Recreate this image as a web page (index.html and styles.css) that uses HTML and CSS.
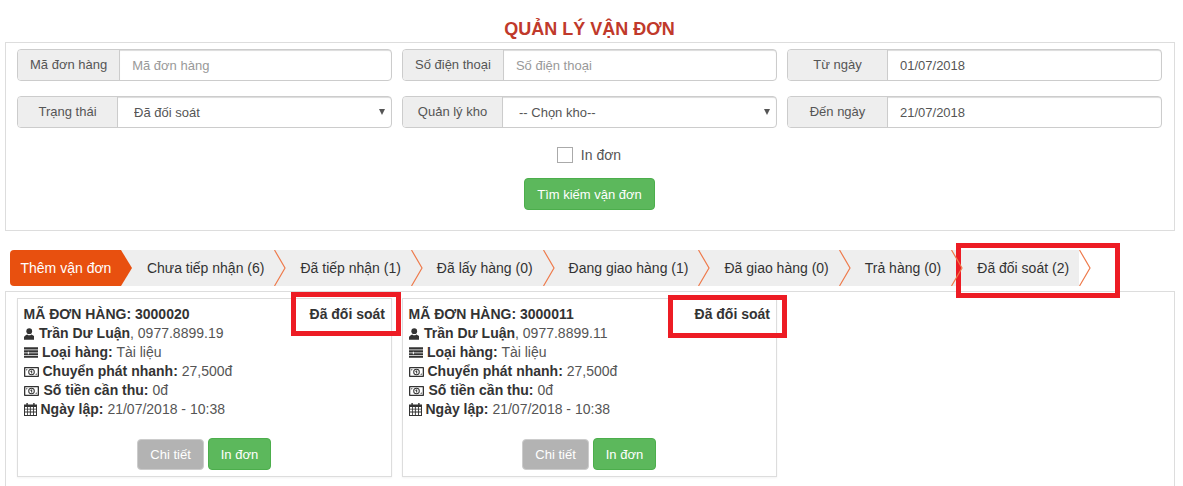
FILE: index.html
```html
<!DOCTYPE html>
<html lang="vi">
<head>
<meta charset="utf-8">
<title>Quản lý vận đơn</title>
<link rel="stylesheet" href="styles.css">
</head>
<body>
<svg class="sprite" aria-hidden="true">
  <symbol id="i-user" viewBox="0 0 11 12"><ellipse cx="5.5" cy="3" rx="3" ry="3"/><path d="M0 12V9.4C0 7.8 2 7.3 3.3 6.4 4.6 7.6 6.4 7.6 7.7 6.4 9 7.3 11 7.8 11 9.4V12Z"/></symbol>
  <symbol id="i-list" viewBox="0 0 15 11"><path d="M0 0H15V2.4H0ZM0 3.3H15V5.4H5V4.6H4V5.4H0ZM0 6.2H4V7.2H5V6.2H15V8H0ZM0 8.8H15V11H0Z"/></symbol>
  <symbol id="i-money" viewBox="0 0 15 10"><path fill-rule="evenodd" d="M.8 0H14.2Q15 0 15 .8V9.2Q15 10 14.2 10H.8Q0 10 0 9.2V.8Q0 0 .8 0ZM1.3 1.3V8.7H13.7V1.3Z"/><path fill-rule="evenodd" d="M7.5 1.7A3.3 3.3 0 1 1 7.5 8.3 3.3 3.3 0 1 1 7.5 1.7ZM7.5 2.7A2.3 2.3 0 1 0 7.5 7.3 2.3 2.3 0 1 0 7.5 2.7Z"/><path d="M7.2 3.5H8.2V6.6H7.2V4.5L6.6 4.9 6.2 4.3ZM2.2 2.2H3.8L2.2 3.8ZM12.8 7.8H11.2L12.8 6.2Z"/></symbol>
  <symbol id="i-cal" viewBox="0 0 13 13"><path fill-rule="evenodd" d="M0 1.5H2.4V0H3.8V1.5H9.2V0H10.6V1.5H13V13H0ZM1 4V5.8H3V4ZM3.8 4V5.8H5.9V4ZM6.8 4V5.8H9V4ZM9.9 4V5.8H12V4ZM1 6.6V8.6H3V6.6ZM3.8 6.6V8.6H5.9V6.6ZM6.8 6.6V8.6H9V6.6ZM9.9 6.6V8.6H12V6.6ZM1 9.4V12H3V9.4ZM3.8 9.4V12H5.9V9.4ZM6.8 9.4V12H9V9.4ZM9.9 9.4V12H12V9.4Z"/></symbol>
  <symbol id="i-chev" viewBox="0 0 12 36"><path d="M.5 0 11 18 .5 36" fill="none" stroke="#ee7a4b" stroke-width="1.2"/></symbol>
</svg>

<h1 class="page-title">QUẢN LÝ VẬN ĐƠN</h1>

<section class="panel filter">
  <div class="filter-grid">
    <label class="group"><span class="addon">Mã đơn hàng</span><input class="control" type="text" placeholder="Mã đơn hàng"></label>
    <label class="group"><span class="addon">Số điện thoại</span><input class="control" type="text" placeholder="Số điện thoại"></label>
    <label class="group"><span class="addon">Từ ngày</span><input class="control" type="text" value="01/07/2018"></label>
    <label class="group"><span class="addon">Trạng thái</span><span class="select-wrap"><select class="control select"><option>Đã đối soát</option></select></span></label>
    <label class="group"><span class="addon">Quản lý kho</span><span class="select-wrap"><select class="control select"><option>-- Chọn kho--</option></select></span></label>
    <label class="group"><span class="addon">Đến ngày</span><input class="control" type="text" value="21/07/2018"></label>
  </div>
  <label class="check"><span class="check-box"></span>In đơn</label>
  <div class="search-row"><button class="btn btn-green" type="button">Tìm kiếm vận đơn</button></div>
</section>

<ul class="tabs">
  <li class="tab tab-add">Thêm vận đơn</li>
  <li class="tab">Chưa tiếp nhận (6)<svg class="chev"><use href="#i-chev"/></svg></li>
  <li class="tab">Đã tiếp nhận (1)<svg class="chev"><use href="#i-chev"/></svg></li>
  <li class="tab">Đã lấy hàng (0)<svg class="chev"><use href="#i-chev"/></svg></li>
  <li class="tab">Đang giao hàng (1)<svg class="chev"><use href="#i-chev"/></svg></li>
  <li class="tab">Đã giao hàng (0)<svg class="chev"><use href="#i-chev"/></svg></li>
  <li class="tab">Trả hàng (0)<svg class="chev"><use href="#i-chev"/></svg></li>
  <li class="tab">Đã đối soát (2)<svg class="chev"><use href="#i-chev"/></svg></li>
</ul>

<section class="panel orders">
  <article class="card">
    <div class="card-head"><b>MÃ ĐƠN HÀNG: 3000020</b><b>Đã đối soát</b></div>
    <div class="line"><svg class="ic ic-user"><use href="#i-user"/></svg><b>Trần Dư Luận</b>, 0977.8899.19</div>
    <div class="line"><svg class="ic ic-list"><use href="#i-list"/></svg><b>Loại hàng:</b> Tài liệu</div>
    <div class="line"><svg class="ic ic-money"><use href="#i-money"/></svg><b>Chuyển phát nhanh:</b> 27,500đ</div>
    <div class="line"><svg class="ic ic-money ic-wide"><use href="#i-money"/></svg><b>Số tiền cần thu:</b> 0đ</div>
    <div class="line"><svg class="ic ic-cal"><use href="#i-cal"/></svg><b>Ngày lập:</b> 21/07/2018 - 10:38</div>
    <div class="card-actions"><button class="btn btn-grey" type="button">Chi tiết</button><button class="btn btn-green" type="button">In đơn</button></div>
  </article>
  <article class="card">
    <div class="card-head"><b>MÃ ĐƠN HÀNG: 3000011</b><b>Đã đối soát</b></div>
    <div class="line"><svg class="ic ic-user"><use href="#i-user"/></svg><b>Trần Dư Luận</b>, 0977.8899.11</div>
    <div class="line"><svg class="ic ic-list"><use href="#i-list"/></svg><b>Loại hàng:</b> Tài liệu</div>
    <div class="line"><svg class="ic ic-money"><use href="#i-money"/></svg><b>Chuyển phát nhanh:</b> 27,500đ</div>
    <div class="line"><svg class="ic ic-money ic-wide"><use href="#i-money"/></svg><b>Số tiền cần thu:</b> 0đ</div>
    <div class="line"><svg class="ic ic-cal"><use href="#i-cal"/></svg><b>Ngày lập:</b> 21/07/2018 - 10:38</div>
    <div class="card-actions"><button class="btn btn-grey" type="button">Chi tiết</button><button class="btn btn-green" type="button">In đơn</button></div>
  </article>
</section>

<div class="mark mark-card1"></div>
<div class="mark mark-card2"></div>
<div class="mark mark-tab"></div>
</body>
</html>
```

FILE: styles.css
```css
* { box-sizing: border-box; }
html, body { height: 486px; overflow: hidden; }
body {
  margin: 0;
  position: relative;
  background: #fff;
  color: #555;
  font: 14px/19px "Liberation Sans", Arial, sans-serif;
}
.sprite { position: absolute; width: 0; height: 0; }

.page-title {
  margin: 0;
  height: 42px;
  padding: 18px 4px 0 0;
  text-align: center;
  color: #c0392b;
  font-size: 18px;
  line-height: 22px;
  font-weight: 700;
}

.panel {
  margin: 0 8px 0 5px;
  border: 1px solid #ddd;
  background: #fff;
}
.filter { height: 189px; padding: 6px 12px 0 11px; }

.filter-grid {
  display: grid;
  grid-template-columns: repeat(3, 375px);
  column-gap: 10px;
  row-gap: 15px;
  font-size: 13px;
}
.group {
  display: flex;
  height: 32px;
  border: 1px solid #ccc;
  border-radius: 4px;
  overflow: hidden;
  box-shadow: inset 0 1px 1px rgba(0,0,0,.075);
}
.addon {
  flex: none;
  min-width: 100px;
  padding: 0 12px;
  background: #eee;
  border-right: 1px solid #ccc;
  color: #555;
  line-height: 29px;
  text-align: center;
  white-space: nowrap;
}
.control {
  flex: 1;
  min-width: 0;
  width: 100%;
  height: 100%;
  padding: 0 12px;
  border: 0;
  outline: 0;
  background: transparent;
  color: #555;
  font: inherit;
  box-shadow: inset 0 1px 1px rgba(0,0,0,.075);
}
.control::placeholder { color: #999; opacity: 1; }
.select-wrap { flex: 1; position: relative; min-width: 0; }
.select { display: block; padding-left: 16px; appearance: none; -webkit-appearance: none; }
.select-wrap::after {
  content: "";
  position: absolute;
  right: 6px;
  top: 12px;
  border-top: 6px solid #555;
  border-left: 3px solid transparent;
  border-right: 3px solid transparent;
  pointer-events: none;
}

.check {
  display: flex;
  justify-content: center;
  align-items: center;
  gap: 8px;
  margin-top: 19px;
  height: 16px;
  color: #555;
  padding-right: 1px;
}
.check-box {
  width: 16px;
  height: 16px;
  border: 1px solid #aaa;
  background: #fff;
}
.search-row { display: flex; justify-content: center; margin-top: 15px; }

.btn {
  height: 32px;
  padding: 0 12px;
  border: 1px solid transparent;
  border-radius: 4px;
  color: #fff;
  font: inherit;
  font-size: 13px;
}
.btn-green { background: #5cb85c; border-color: #4cae4c; }
.btn-grey { background: #b3b3b3; border-color: #ccc; height: 31px; margin-top: 1px; }

.tabs {
  display: flex;
  height: 36px;
  margin: 19px 0 5px 10px;
  padding: 0;
  list-style: none;
  color: #333;
}
.tab {
  position: relative;
  padding: 0 10px 0 26px;
  background: #eee;
  line-height: 36px;
  white-space: nowrap;
}
.tab-add {
  z-index: 1;
  padding: 0 9.5px 0 10.5px;
  background: #e8500f;
  color: #fff;
  border-radius: 4px 0 0 4px;
}
.tab-add::after {
  content: "";
  position: absolute;
  left: 100%;
  top: 0;
  border-left: 11px solid #e8500f;
  border-top: 18px solid transparent;
  border-bottom: 18px solid transparent;
}
.chev {
  position: absolute;
  left: 100%;
  top: 0;
  z-index: 1;
  width: 12px;
  height: 36px;
  overflow: visible;
}

.orders {
  display: flex;
  gap: 10px;
  height: 195px;
  padding: 6px 0 0 11px;
  border-bottom: 0;
}
.card {
  flex: none;
  width: 375px;
  height: 179px;
  padding: 6px 6px 0 5.5px;
  border: 1px solid #ddd;
  box-shadow: 0 1px 2px rgba(0,0,0,.05);
}
.card b { color: #333; font-weight: 700; }
.card-head { display: flex; justify-content: space-between; }
.line { height: 19px; white-space: nowrap; }
.ic { display: inline-block; fill: #333; vertical-align: -2px; }
.ic-user { width: 10.5px; height: 12px; margin-right: 5px; }
.ic-list { width: 14.5px; height: 11px; margin-right: 4px; vertical-align: -1px; }
.ic-money { width: 15px; height: 10px; margin-right: 4px; vertical-align: -1px; }
.ic-wide { margin-right: 5px; }
.ic-cal { width: 13px; height: 13px; margin-right: 4px; }
.card-actions { display: flex; justify-content: center; gap: 4px; margin-top: 19px; }

.mark { position: absolute; border: 5px solid #ed1c24; }
.mark-card1 { left: 291px; top: 292px; width: 110px; height: 44px; }
.mark-card2 { left: 668px; top: 295px; width: 119px; height: 43px; }
.mark-tab { left: 956px; top: 243px; width: 164px; height: 55px; }
```
